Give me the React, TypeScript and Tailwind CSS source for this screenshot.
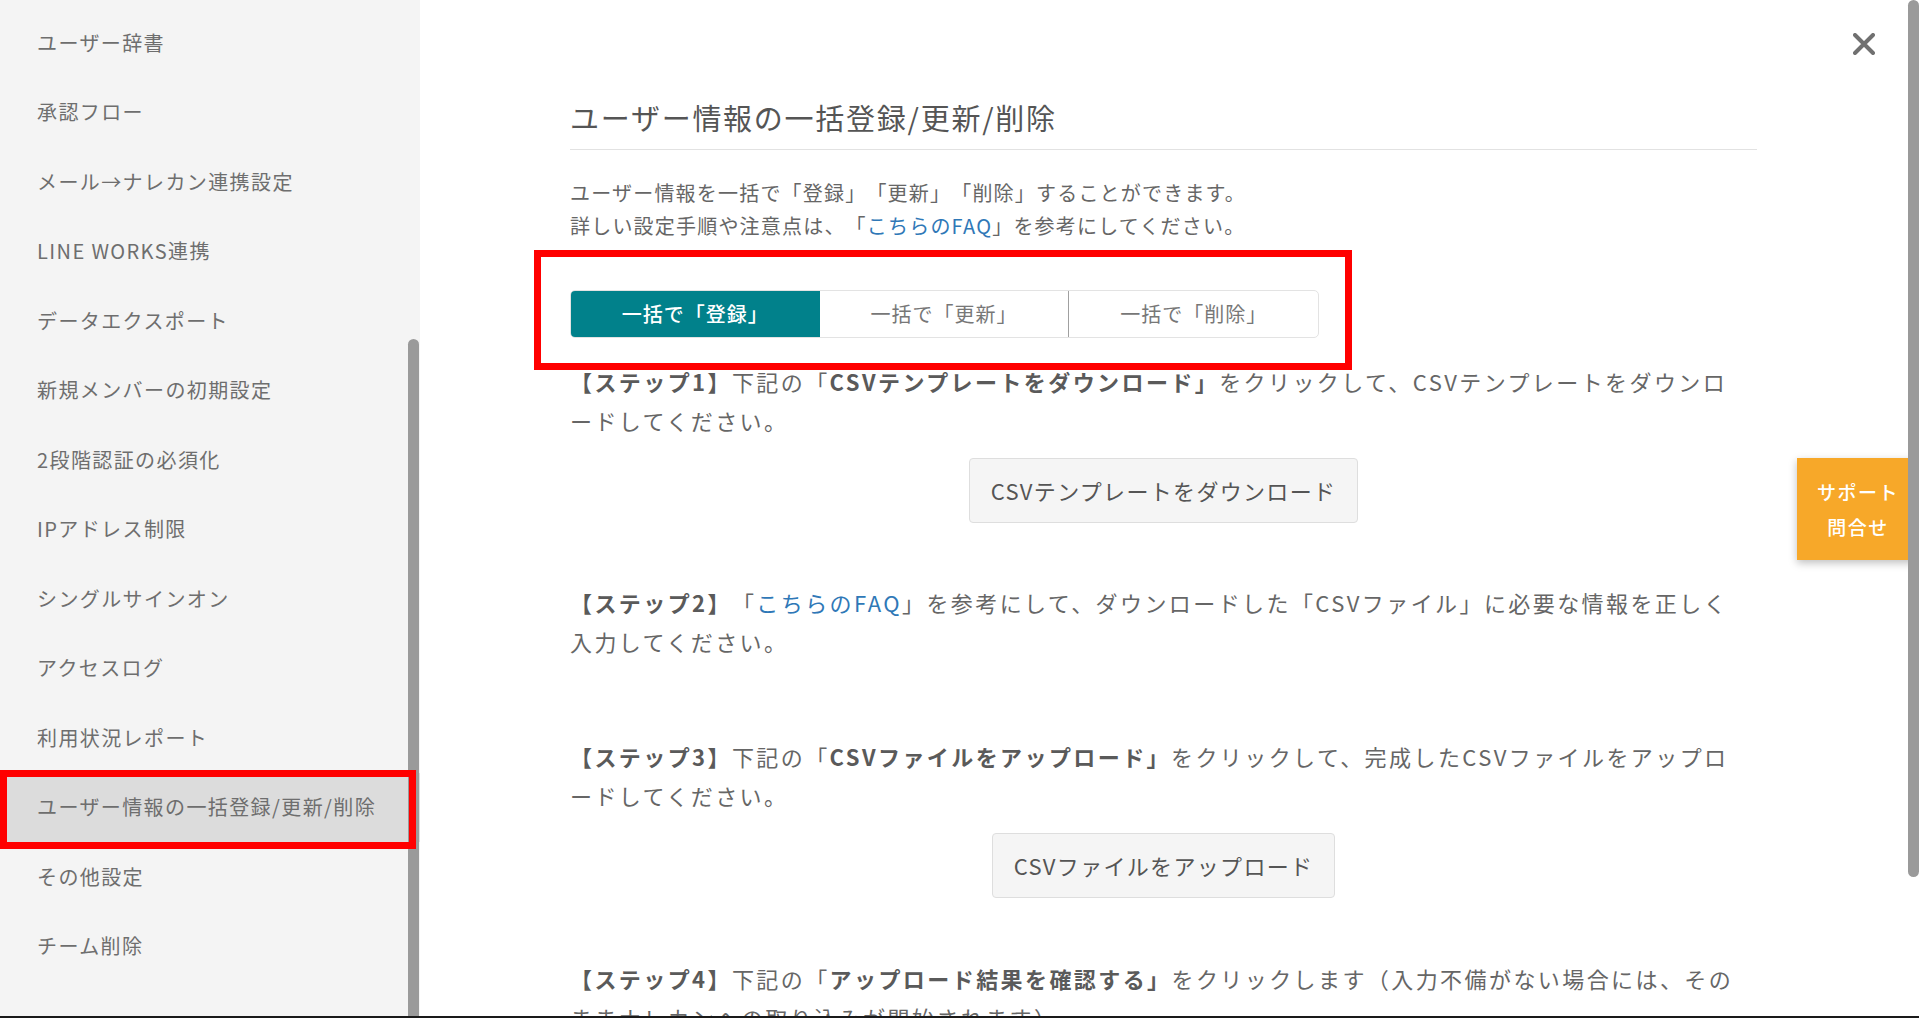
import React from "react";

const FONT = { fontFamily: '"Noto Sans CJK JP", "Noto Sans", sans-serif' };

const items = [
  "ユーザー辞書",
  "承認フロー",
  "メール→ナレカン連携設定",
  "LINE WORKS連携",
  "データエクスポート",
  "新規メンバーの初期設定",
  "2段階認証の必須化",
  "IPアドレス制限",
  "シングルサインオン",
  "アクセスログ",
  "利用状況レポート",
  "ユーザー情報の一括登録/更新/削除",
  "その他設定",
  "チーム削除",
];

function Sidebar() {
  return (
    <aside className="relative w-[420px] shrink-0 h-full bg-[#f4f4f4] overflow-hidden">
      <ul className="pt-[8px]">
        {items.map((t, i) => (
          <li
            key={t}
            className={
              "h-[69.5px] flex items-center pl-[37px] text-[20px] tracking-[0.07em] text-[#6e6e6e] " +
              (i === 11 ? "bg-[#dcdcdc]" : "")
            }
          >
            {t}
          </li>
        ))}
      </ul>
      <div className="absolute left-[408px] top-[339px] w-[11px] h-[700px] rounded-full bg-[#9a9a9a]" />
    </aside>
  );
}

function Step({ children }: { children: React.ReactNode }) {
  return (
    <p className="text-[22px] leading-[39px] tracking-[0.11em] text-[#666] whitespace-nowrap">{children}</p>
  );
}

function B({ children }: { children: React.ReactNode }) {
  return <span className="font-bold text-[#5a5a5a]">{children}</span>;
}

function Btn({ children }: { children: React.ReactNode }) {
  return (
    <div className="flex justify-center">
      <button className="h-[65px] px-[21px] rounded-[4px] border border-[#dedede] bg-[#f5f5f5] text-[22px] tracking-[0.06em] text-[#555]">
        {children}
      </button>
    </div>
  );
}

function Main() {
  return (
    <main className="relative flex-1 h-full bg-white overflow-hidden">
      <div className="mx-auto w-[1187px] pr-[12px] box-content">
        <div className="w-[1187px]">
          <h1 className="mt-[97px] text-[29px] leading-[40px] tracking-[0.06em] text-[#555] pb-[12px] border-b border-[#e2e2e2]">
            ユーザー情報の一括登録/更新/削除
          </h1>
          <p className="mt-[26px] text-[20px] leading-[33px] tracking-[0.06em] text-[#666]">
            ユーザー情報を一括で「登録」「更新」「削除」することができます。
            <br />
            詳しい設定手順や注意点は、「<span className="text-[#2f78b7]">こちらのFAQ</span>」を参考にしてください。
          </p>
          <div className="mt-[48px] flex w-[749px] h-[48px] rounded-[5px] border border-[#e3e3e3] overflow-hidden text-[20px] tracking-[0.05em]">
            <div className="flex-1 flex items-center justify-center bg-[#01818b] text-white font-medium">
              一括で「登録」
            </div>
            <div className="flex-1 flex items-center justify-center text-[#777] border-r border-[#a0a0a0]">
              一括で「更新」
            </div>
            <div className="flex-1 flex items-center justify-center text-[#777]">
              一括で「削除」
            </div>
          </div>
          <div className="mt-[24px]">
            <Step>
              <B>【ステップ1】</B>下記の「<B>CSVテンプレートをダウンロード」</B>をクリックして、CSVテンプレートをダウンロ
              <br />
              ードしてください。
            </Step>
          </div>
          <div className="mt-[18px]">
            <Btn>CSVテンプレートをダウンロード</Btn>
          </div>
          <div className="mt-[60px]">
            <Step>
              <B>【ステップ2】</B>「<span className="text-[#2f78b7]">こちらのFAQ</span>」を参考にして、ダウンロードした「CSVファイル」に必要な情報を正しく
              <br />
              入力してください。
            </Step>
          </div>
          <div className="mt-[76px]">
            <Step>
              <B>【ステップ3】</B>下記の「<B>CSVファイルをアップロード」</B>をクリックして、完成したCSVファイルをアップロ
              <br />
              ードしてください。
            </Step>
          </div>
          <div className="mt-[18px]">
            <Btn>CSVファイルをアップロード</Btn>
          </div>
          <div className="mt-[61px]">
            <Step>
              <B>【ステップ4】</B>下記の「<B>アップロード結果を確認する」</B>をクリックします（入力不備がない場合には、その
              <br />
              ままナレカンへの取り込みが開始されます）
            </Step>
          </div>
        </div>
      </div>

      {/* close */}
      <svg
        className="absolute left-[1433px] top-[33px]"
        width="22"
        height="22"
        viewBox="0 0 22 22"
      >
        <path d="M2 2 L20 20 M20 2 L2 20" stroke="#707070" strokeWidth="4" strokeLinecap="round" />
      </svg>

      {/* right scrollbar */}
      <div className="absolute right-0 top-0 w-[11px] h-[877px] rounded-full bg-[#9a9a9a] z-20" />

      {/* annotation box */}
      <div className="absolute left-[114px] top-[250px] w-[818px] h-[120px] border-[7px] border-[#ff0000] pointer-events-none" />
    </main>
  );
}

export default function App() {
  return (
    <div
      className="relative w-[1919px] h-[1018px] flex overflow-hidden bg-white [text-spacing-trim:space-all]"
      style={FONT}
    >
      <Sidebar />
      <Main />
      {/* sidebar annotation */}
      <div className="absolute left-0 top-[770px] w-[416px] h-[79px] border-[7px] border-[#ff0000] pointer-events-none" />
      {/* support */}
      <div className="absolute left-[1797px] top-[458px] w-[122px] h-[102px] bg-[#f7a829] shadow-[0_3px_8px_rgba(0,0,0,0.25)] flex flex-col items-center justify-center text-white text-[19px] leading-[35px] font-medium tracking-[0.08em] z-10">
        <span>サポート</span>
        <span>問合せ</span>
      </div>
      <div className="absolute left-0 bottom-0 w-full h-[2px] bg-[#1a1a1a] z-30" />
    </div>
  );
}
